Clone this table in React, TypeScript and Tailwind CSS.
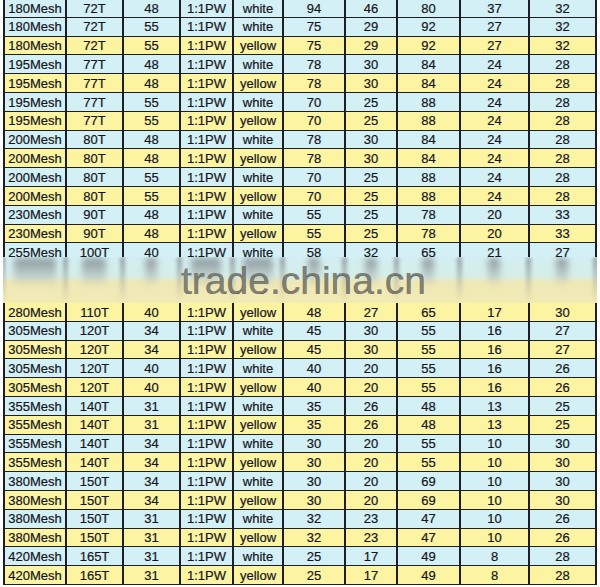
import clsx from 'clsx';

type Row = string[];

const upper: Row[] = [
  ['180Mesh', '72T', '48', '1:1PW', 'white', '94', '46', '80', '37', '32'],
  ['180Mesh', '72T', '55', '1:1PW', 'white', '75', '29', '92', '27', '32'],
  ['180Mesh', '72T', '55', '1:1PW', 'yellow', '75', '29', '92', '27', '32'],
  ['195Mesh', '77T', '48', '1:1PW', 'white', '78', '30', '84', '24', '28'],
  ['195Mesh', '77T', '48', '1:1PW', 'yellow', '78', '30', '84', '24', '28'],
  ['195Mesh', '77T', '55', '1:1PW', 'white', '70', '25', '88', '24', '28'],
  ['195Mesh', '77T', '55', '1:1PW', 'yellow', '70', '25', '88', '24', '28'],
  ['200Mesh', '80T', '48', '1:1PW', 'white', '78', '30', '84', '24', '28'],
  ['200Mesh', '80T', '48', '1:1PW', 'yellow', '78', '30', '84', '24', '28'],
  ['200Mesh', '80T', '55', '1:1PW', 'white', '70', '25', '88', '24', '28'],
  ['200Mesh', '80T', '55', '1:1PW', 'yellow', '70', '25', '88', '24', '28'],
  ['230Mesh', '90T', '48', '1:1PW', 'white', '55', '25', '78', '20', '33'],
  ['230Mesh', '90T', '48', '1:1PW', 'yellow', '55', '25', '78', '20', '33'],
];

// this row runs into the smeared band and is cut off there
const cut: Row = ['255Mesh', '100T', '40', '1:1PW', 'white', '58', '32', '65', '21', '27'];

const lower: Row[] = [
  ['280Mesh', '110T', '40', '1:1PW', 'yellow', '48', '27', '65', '17', '30'],
  ['305Mesh', '120T', '34', '1:1PW', 'white', '45', '30', '55', '16', '27'],
  ['305Mesh', '120T', '34', '1:1PW', 'yellow', '45', '30', '55', '16', '27'],
  ['305Mesh', '120T', '40', '1:1PW', 'white', '40', '20', '55', '16', '26'],
  ['305Mesh', '120T', '40', '1:1PW', 'yellow', '40', '20', '55', '16', '26'],
  ['355Mesh', '140T', '31', '1:1PW', 'white', '35', '26', '48', '13', '25'],
  ['355Mesh', '140T', '31', '1:1PW', 'yellow', '35', '26', '48', '13', '25'],
  ['355Mesh', '140T', '34', '1:1PW', 'white', '30', '20', '55', '10', '30'],
  ['355Mesh', '140T', '34', '1:1PW', 'yellow', '30', '20', '55', '10', '30'],
  ['380Mesh', '150T', '34', '1:1PW', 'white', '30', '20', '69', '10', '30'],
  ['380Mesh', '150T', '34', '1:1PW', 'yellow', '30', '20', '69', '10', '30'],
  ['380Mesh', '150T', '31', '1:1PW', 'white', '32', '23', '47', '10', '26'],
  ['380Mesh', '150T', '31', '1:1PW', 'yellow', '32', '23', '47', '10', '26'],
  ['420Mesh', '165T', '31', '1:1PW', 'white', '25', '17', '49', '8', '28'],
  ['420Mesh', '165T', '31', '1:1PW', 'yellow', '25', '17', '49', '8', '28'],
];

const widths = [
  'w-[62px]',
  'w-[57px]',
  'w-[57px]',
  'w-[53px]',
  'w-[50px]',
  'w-[62px]',
  'w-[52px]',
  'w-[63px]',
  'w-[69px]',
  'w-[67px]',
];

function TableRow({ row }: { row: Row }) {
  const yellow = row[4] === 'yellow';
  return (
    <div
      className={clsx(
        'flex h-[18.8px] shrink-0 border-b border-[#1e1e26]',
        yellow ? 'bg-[#fcf4a0]' : 'bg-[#d3f0f6]'
      )}
    >
      {row.map((v, i) => (
        <div
          key={i}
          className={clsx(
            'flex shrink-0 items-center justify-center border-r-2 border-[#1e1e26] pt-[1px]',
            widths[i]
          )}
        >
          {v}
        </div>
      ))}
    </div>
  );
}

function SmearBand() {
  return (
    <div className="relative flex h-[46px] shrink-0 overflow-hidden bg-[linear-gradient(to_bottom,#d3eef3_0%,#d6eee9_40%,#eee8b9_55%,#f3ebb4_100%)]">
      <div className="w-[2px] shrink-0 bg-linear-to-b from-[#7f8a8e] to-transparent blur-[1.5px]" />
      {cut.map((v, i) => (
        <div key={i} className={clsx('flex shrink-0', widths[i])}>
          <div className="flex flex-1 justify-center pt-[1px]">
            <div
              className="h-[28px] rounded-sm bg-linear-to-b from-[#7e898e]/85 via-[#98a09f]/55 to-transparent blur-[3px]"
              style={{ width: v.length * 6 }}
            />
          </div>
          <div className="w-[3px] bg-linear-to-b from-[#5c6366]/90 via-[#8d938d]/60 to-transparent blur-[2px]" />
        </div>
      ))}
      <div className="absolute left-[178px] top-[4px] text-[39px] leading-none text-[#66665c]/80">
        trade.china.cn
      </div>
    </div>
  );
}

export default function App() {
  return (
    <div className="h-[587px] w-[600px] overflow-hidden bg-white font-['Liberation_Sans',Arial,sans-serif] text-[13px] text-[#15151d] [-webkit-text-stroke:0.2px_#15151d]">
      <div className="ml-[3px] -mt-[1px] flex w-[594px] flex-col">
        <div className="flex flex-col border-l-2 border-[#1e1e26]">
          {upper.map((r, i) => (
            <TableRow key={i} row={r} />
          ))}
          <div className="h-[13.6px] overflow-hidden">
            <TableRow row={cut} />
          </div>
        </div>
        <SmearBand />
        <div className="flex flex-col border-l-2 border-[#1e1e26]">
          {lower.map((r, i) => (
            <TableRow key={i} row={r} />
          ))}
        </div>
      </div>
    </div>
  );
}
